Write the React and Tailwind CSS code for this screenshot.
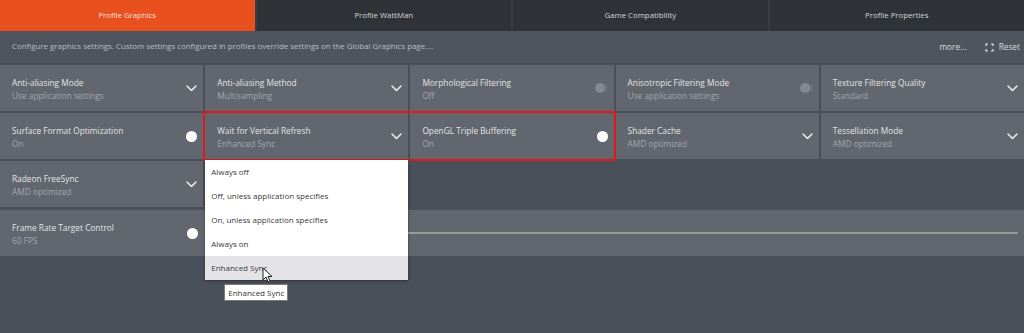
import React from "react";

const font = { fontFamily: '"Open Sans", "Noto Sans", sans-serif' };

function Chevron() {
  return (
    <svg width="11" height="7" viewBox="0 0 11 7" fill="none" stroke="#e8e9eb" strokeWidth="1.6" strokeLinecap="round" strokeLinejoin="round">
      <polyline points="1,1 5.5,5.5 10,1" />
    </svg>
  );
}

function Knob({ off }) {
  return off ? (
    <div className="w-[10px] h-[10px] rounded-full bg-[#858890] shadow-[4px_0_0_-1px_#6d7078] mr-[3px]" />
  ) : (
    <div className="w-[11px] h-[11px] rounded-full bg-white" />
  );
}

function Card({ title, value, control, children, className = "" }) {
  return (
    <div className={`relative h-[46px] bg-[#62666e] flex items-center justify-between pl-3 pr-[6px] ${className}`}>
      <div className="flex flex-col leading-[13px] mt-[1px]">
        <span className="text-[8.3px] text-[#e4e5e7]">{title}</span>
        <span className="text-[8.3px] text-[#a4a8ae]">{value}</span>
      </div>
      {control === "chev" && <Chevron />}
      {control === "on" && <Knob />}
      {control === "off" && <Knob off />}
      {children}
    </div>
  );
}

const tabs = ["Profile Graphics", "Profile WattMan", "Game Compatibility", "Profile Properties"];
const options = [
  "Always off",
  "Off, unless application specifies",
  "On, unless application specifies",
  "Always on",
  "Enhanced Sync",
];

export default function App() {
  return (
    <div className="w-[1024px] h-[333px] bg-[#4a505a] overflow-hidden relative" style={font}>
      {/* Tabs */}
      <div className="grid grid-cols-4 gap-[2px] h-[31px] bg-[#3a3e44]">
        {tabs.map((t, i) => (
          <div
            key={t}
            className={`flex items-center justify-center text-[7.8px] ${
              i === 0 ? "bg-[#e8501f] text-[#fbe3d8]" : "bg-[#2f3237] text-[#d6d7da]"
            }`}
          >
            {t}
          </div>
        ))}
      </div>

      {/* Description row */}
      <div className="h-[33px] bg-[#4f555e] flex items-center justify-between pl-3 pr-[4px] border-b border-[#464b53]">
        <span className="text-[7.9px] text-[#b9bdc3]">
          Configure graphics settings. Custom settings configured in profiles override settings on the Global Graphics page....
        </span>
        <div className="flex items-center gap-[18px] text-[8.3px] text-[#d8dadd]">
          <span>more...</span>
          <span className="flex items-center gap-[5px]">
            <svg width="9" height="9" viewBox="0 0 9 9" fill="none" stroke="#e4e5e7" strokeWidth="1.2">
              <path d="M1 3V1h2M6 1h2v2M8 6v2H6M3 8H1V6" />
            </svg>
            Reset
          </span>
        </div>
      </div>

      {/* Settings grid */}
      <div className="grid grid-cols-5 gap-[2px] mt-[1px]">
        <Card title="Anti-aliasing Mode" value="Use application settings" control="chev" />
        <Card title="Anti-aliasing Method" value="Multisampling" control="chev" />
        <Card title="Morphological Filtering" value="Off" control="off" />
        <Card title="Anisotropic Filtering Mode" value="Use application settings" control="off" />
        <Card title="Texture Filtering Quality" value="Standard" control="chev" />

        <Card title="Surface Format Optimization" value="On" control="on" />
        <div className="col-span-2 grid grid-cols-2 gap-[2px] ring-2 ring-[#dc1a1a] relative z-10">
          <Card title="Wait for Vertical Refresh" value="Enhanced Sync" control="chev">
            <div className="absolute left-0 top-[47px] w-full bg-white z-20 shadow-[0_1px_3px_rgba(0,0,0,0.4)]">
              {options.map((o, i) => (
                <div
                  key={o}
                  className={`h-[24px] flex items-center pl-[6px] text-[8px] text-[#3a3a3a] ${
                    i === 4 ? "bg-[#e4e4e6]" : ""
                  }`}
                >
                  {o}
                </div>
              ))}
              <div className="absolute left-[19px] top-[124px] px-[3px] h-[17px] flex items-center bg-white border border-[#7a7a7a] text-[8px] text-[#333]">
                Enhanced Sync
              </div>
              <svg className="absolute left-[57px] top-[107px]" width="11" height="16" viewBox="0 0 11 16">
                <path d="M1 1v12l3-3 2 5 2-1-2-4.5h4z" fill="#fff" stroke="#222" strokeWidth="1" strokeLinejoin="round" />
              </svg>
            </div>
          </Card>
          <Card title="OpenGL Triple Buffering" value="On" control="on" />
        </div>
        <Card title="Shader Cache" value="AMD optimized" control="chev" />
        <Card title="Tessellation Mode" value="AMD optimized" control="chev" />

        <Card title="Radeon FreeSync" value="AMD optimized" control="chev" />
      </div>

      {/* Frame rate row */}
      <div className="mt-[3px] h-[46px] bg-[#62666e] flex items-center">
        <div className="w-[204px] shrink-0 flex items-center justify-between pl-3 pr-[6px]">
          <div className="flex flex-col leading-[13px] mt-[1px]">
            <span className="text-[8.3px] text-[#e4e5e7]">Frame Rate Target Control</span>
            <span className="text-[8.3px] text-[#a4a8ae]">60 FPS</span>
          </div>
          <Knob />
        </div>
        <div className="flex-1 ml-[10px] mr-[6px] h-[2px] bg-[#9a9a9c] rounded-full" />
      </div>
    </div>
  );
}
